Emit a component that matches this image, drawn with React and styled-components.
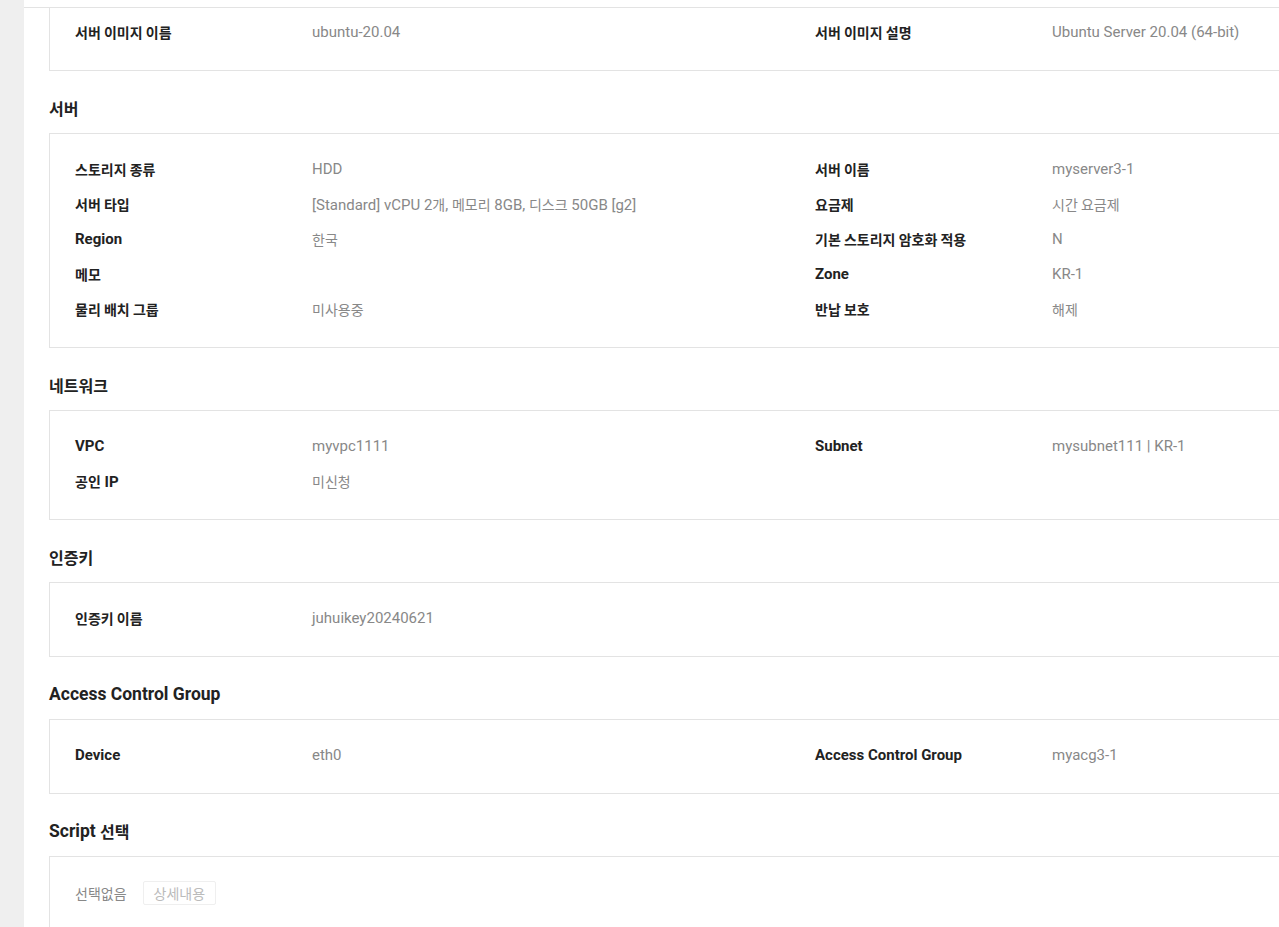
import React from 'react';
import styled, { createGlobalStyle } from 'styled-components';

const GlobalStyle = createGlobalStyle`
  html, body {
    margin: 0;
    padding: 0;
    background: #fff;
    overflow: hidden;
  }
  body {
    font-family: Roboto, "Noto Sans CJK KR", sans-serif;
    font-size: 15px;
    color: #222;
  }
`;

// Hangul runs are set a touch smaller than the Latin ones
const Hangul = styled.span`
  font-family: "Noto Sans CJK KR", sans-serif;
  font-size: ${p => p.$size || '14px'};
`;

const Txt = ({ children, size }) => {
  if (typeof children !== 'string') return children;
  const parts = children.split(/([\u1100-\u11ff\u3130-\u318f\uac00-\ud7af]+(?: [\u1100-\u11ff\u3130-\u318f\uac00-\ud7af]+)*)/);
  return parts.map((p, i) =>
    i % 2 ? <Hangul key={i} $size={size}>{p}</Hangul> : p
  );
};

const Layout = styled.div`
  display: flex;
  height: 927px;
`;

const Sidebar = styled.aside`
  flex: 0 0 24px;
  background: #efefef;
`;

const Main = styled.main`
  flex: 1;
  min-width: 0;
  overflow: hidden;
`;

const TopBar = styled.div`
  height: 7px;
  border-bottom: 1px solid #e3e3e3;
`;

const Content = styled.div`
  padding: 0 0 40px 25px;
`;

const SectionTitle = styled.h3`
  display: flex;
  align-items: center;
  height: 22px;
  margin: 26px 0 14px;
  font-size: 17.5px;
  line-height: 22px;
  font-weight: 700;
  color: #222;
  white-space: pre;
`;

const Panel = styled.div`
  width: 1530px;
  box-sizing: border-box;
  border: 1px solid #e3e3e3;
  border-top: ${p => (p.$cut ? 'none' : '1px solid #e3e3e3')};
  padding: ${p => (p.$cut ? '6px' : '17px')} 25px 21px;
`;

const InfoGrid = styled.div`
  display: grid;
  grid-template-columns: 237px 503px 237px 503px;
  grid-auto-rows: 35px;
  align-items: center;
`;

const Label = styled.div`
  font-weight: 700;
  color: #222;
`;

const Value = styled.div`
  color: #888;
`;

const ScriptRow = styled.div`
  display: flex;
  align-items: center;
  gap: 16px;
  height: 35px;
  margin-top: 1px;
`;

const Muted = styled.span`
  color: #888;
`;

const GhostButton = styled.button`
  height: 24px;
  padding: 0 10px;
  border: 1px solid #efefef;
  border-radius: 2px;
  background: #fff;
  color: #bbb;
  font-family: "Noto Sans CJK KR", sans-serif;
  font-size: 14px;
  cursor: default;
`;

const Info = ({ rows }) => (
  <InfoGrid>
    {rows.map((r, i) => (
      <React.Fragment key={i}>
        <Label><Txt>{r[0]}</Txt></Label>
        <Value><Txt>{r[1]}</Txt></Value>
        <Label><Txt>{r[2]}</Txt></Label>
        <Value><Txt>{r[3]}</Txt></Value>
      </React.Fragment>
    ))}
  </InfoGrid>
);

const Title = ({ children }) => (
  <SectionTitle><Txt size="16px">{children}</Txt></SectionTitle>
);

export default function App() {
  return (
    <>
      <GlobalStyle />
      <Layout>
        <Sidebar />
        <Main>
          <TopBar />
          <Content>
            <Panel $cut>
              <Info rows={[['서버 이미지 이름', 'ubuntu-20.04', '서버 이미지 설명', 'Ubuntu Server 20.04 (64-bit)']]} />
            </Panel>

            <Title>서버</Title>
            <Panel>
              <Info
                rows={[
                  ['스토리지 종류', 'HDD', '서버 이름', 'myserver3-1'],
                  ['서버 타입', '[Standard] vCPU 2개, 메모리 8GB, 디스크 50GB [g2]', '요금제', '시간 요금제'],
                  ['Region', '한국', '기본 스토리지 암호화 적용', 'N'],
                  ['메모', '', 'Zone', 'KR-1'],
                  ['물리 배치 그룹', '미사용중', '반납 보호', '해제'],
                ]}
              />
            </Panel>

            <Title>네트워크</Title>
            <Panel>
              <Info
                rows={[
                  ['VPC', 'myvpc1111', 'Subnet', 'mysubnet111 | KR-1'],
                  ['공인 IP', '미신청', '', ''],
                ]}
              />
            </Panel>

            <Title>인증키</Title>
            <Panel>
              <Info rows={[['인증키 이름', 'juhuikey20240621', '', '']]} />
            </Panel>

            <Title>Access Control Group</Title>
            <Panel>
              <Info rows={[['Device', 'eth0', 'Access Control Group', 'myacg3-1']]} />
            </Panel>

            <Title>Script 선택</Title>
            <Panel>
              <ScriptRow>
                <Muted><Txt>선택없음</Txt></Muted>
                <GhostButton>상세내용</GhostButton>
              </ScriptRow>
            </Panel>
          </Content>
        </Main>
      </Layout>
    </>
  );
}
